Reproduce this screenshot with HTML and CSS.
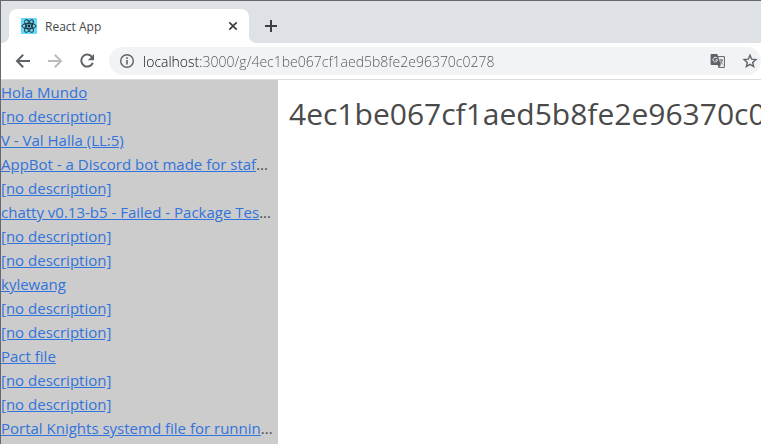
FILE: index.html
```
<!DOCTYPE html>
<html lang="en">
<head>
    <meta charset="UTF-8">
    <title>React App</title>
    <link rel="stylesheet" href="styles.css">
</head>
<body>
    <div class="tabs">
        <div class="tab">
            <svg class="favicon" viewBox="0 0 16 16" width="16" height="16">
                <rect width="16" height="16" rx="1" fill="#61dafb"/>
                <g fill="none" stroke="#20232a" stroke-width=".9">
                    <ellipse cx="8" cy="8" rx="7" ry="2.7"/>
                    <ellipse cx="8" cy="8" rx="7" ry="2.7" transform="rotate(60 8 8)"/>
                    <ellipse cx="8" cy="8" rx="7" ry="2.7" transform="rotate(120 8 8)"/>
                </g>
                <circle cx="8" cy="8" r="1.4" fill="#20232a"/>
            </svg>
            <span class="tab-title">React App</span>
            <button class="icon-button" aria-label="Close tab">
                <svg viewBox="0 0 16 16" width="16" height="16"><path d="M4.3 4.3l7.4 7.4M11.7 4.3l-7.4 7.4" stroke="#3c4043" stroke-width="1.7"/></svg>
            </button>
        </div>
        <button class="icon-button new-tab" aria-label="New tab">
            <svg viewBox="0 0 16 16" width="16" height="16"><path d="M8 2v12M2 8h12" stroke="#3c4043" stroke-width="2"/></svg>
        </button>
    </div>
    <div class="toolbar">
        <button class="icon-button" aria-label="Back">
            <svg viewBox="0 0 16 16" width="16" height="16"><path d="M15 8H2.5M8.2 1.8L2 8l6.2 6.2" fill="none" stroke="#5f6368" stroke-width="2"/></svg>
        </button>
        <button class="icon-button" aria-label="Forward" disabled>
            <svg viewBox="0 0 16 16" width="16" height="16"><path d="M1 8h12.5M7.8 1.8L14 8l-6.2 6.2" fill="none" stroke="#babcbe" stroke-width="2"/></svg>
        </button>
        <button class="icon-button" aria-label="Reload">
            <svg viewBox="0 0 16 16" width="16" height="16"><path d="M13.2 4.2A6 6 0 1 0 13.8 9.8" fill="none" stroke="#5f6368" stroke-width="2"/><path d="M15 1v6.2H8.8z" fill="#5f6368"/></svg>
        </button>
        <div class="address">
            <button class="icon-button" aria-label="Site information">
                <svg viewBox="0 0 16 16" width="16" height="16"><circle cx="8" cy="8" r="6.3" fill="none" stroke="#5f6368" stroke-width="1.4"/><path d="M8 4.3v1.6M8 7v4.6" stroke="#5f6368" stroke-width="1.6"/></svg>
            </button>
            <input class="url" type="text" aria-label="Address" value="localhost:3000/g/4ec1be067cf1aed5b8fe2e96370c0278">
            <button class="icon-button" aria-label="Translate this page">
                <svg viewBox="0 0 16 16" width="16" height="16">
                    <path d="M7 3.6h7.4v10.8H8.5" fill="#f1f3f4" stroke="#5f6368"/>
                    <path d="M1.5 1h5.8l3.6 11H1.5a.9.9 0 0 1-.9-.9V1.9A.9.9 0 0 1 1.5 1z" fill="#5f6368"/>
                    <path d="M7.6 12h3.3l-2.3 2.7z" fill="#5f6368"/>
                    <path d="M7 5a2.3 2.3 0 1 0 .6 1.8H5.4" fill="none" stroke="#f1f3f4"/>
                    <path d="M9.3 7H13M11 6v1M12.3 7c-.3 1.6-1 2.6-2 3.5M10 8.2l2.8 3.3" fill="none" stroke="#5f6368" stroke-width=".9"/>
                </svg>
            </button>
            <button class="icon-button" aria-label="Bookmark this page">
                <svg viewBox="0 0 16 16" width="16" height="16"><path d="M8 2.3l1.7 3.9 4.2.4-3.2 2.8.95 4.15L8 11.35l-3.65 2.2.95-4.15-3.2-2.8 4.2-.4z" fill="none" stroke="#5f6368" stroke-width="1.4"/></svg>
            </button>
        </div>
    </div>
    <div class="page">
        <nav class="sidebar">
            <ul class="gists">
                <li><a href="#">Hola Mundo</a></li>
                <li><a href="#">[no description]</a></li>
                <li><a href="#">V - Val Halla (LL:5)</a></li>
                <li><a href="#">AppBot - a Discord bot made for staf</a>...</li>
                <li><a href="#">[no description]</a></li>
                <li><a href="#">chatty v0.13-b5 - Failed - Package Tes</a>...</li>
                <li><a href="#">[no description]</a></li>
                <li><a href="#">[no description]</a></li>
                <li><a href="#">kylewang</a></li>
                <li><a href="#">[no description]</a></li>
                <li><a href="#">[no description]</a></li>
                <li><a href="#">Pact file</a></li>
                <li><a href="#">[no description]</a></li>
                <li><a href="#">[no description]</a></li>
                <li><a href="#">Portal Knights systemd file for runnin</a>...</li>
            </ul>
        </nav>
        <main class="main">
            <h1>4ec1be067cf1aed5b8fe2e96370c0278</h1>
        </main>
    </div>
</body>
</html>
```
FILE: styles.css
```
* {
    box-sizing: border-box;
}
body {
    display: flex;
    flex-direction: column;
    height: 100vh;
    margin: 0;
    border-top: 1px solid #67686b;
    border-left: 1px solid #67686b;
    background: white;
    color: #4a4a4a;
    font-family: "Open Sans", "Noto Sans", sans-serif;
    font-size: 15px;
    overflow: hidden;
}
.icon-button {
    display: flex;
    flex: none;
    padding: 0;
    border: none;
    background: none;
}
.tabs {
    display: flex;
    align-items: center;
    padding: 8px 8px 0;
    background: #dee1e6;
}
.tab {
    display: flex;
    align-items: center;
    position: relative;
    width: 240px;
    height: 34px;
    padding: 0 8px 0 12px;
    border-radius: 8px 8px 0 0;
    background: white;
}
/* curved feet of the active tab */
.tab::before,
.tab::after {
    content: "";
    position: absolute;
    bottom: 0;
    width: 8px;
    height: 8px;
}
.tab::before {
    right: 100%;
    background: radial-gradient(circle at 0 0, transparent 8px, white 8px);
}
.tab::after {
    left: 100%;
    background: radial-gradient(circle at 100% 0, transparent 8px, white 8px);
}
.tab-title {
    flex: 1;
    margin-left: 8px;
    color: #45474a;
    font-size: 12px;
}
.new-tab {
    margin-left: 14px;
}
.toolbar {
    display: flex;
    align-items: center;
    gap: 16px;
    padding: 4px 0 4px 14px;
    border-bottom: 1px solid #dadce0;
}
.address {
    display: flex;
    flex: 1;
    align-items: center;
    height: 28px;
    margin-left: -2px;
    padding: 0 3px 0 10px;
    border-radius: 14px;
    background: #f1f3f4;
}
.address .icon-button + .icon-button {
    margin-left: 16px;
}
.url {
    flex: 1;
    min-width: 0;
    margin: 0 8px;
    padding: 0;
    border: none;
    outline: none;
    /* the host is darker than the rest of the address */
    background: linear-gradient(to right, #101114 58px, #505459 58px);
    -webkit-background-clip: text;
    background-clip: text;
    color: transparent;
    caret-color: #202124;
    font-family: inherit;
    font-size: 14px;
    font-weight: 300;
}
.page {
    display: flex;
    flex: 1;
    min-height: 0;
}
.sidebar {
    flex: none;
    width: 277px;
    background: #ccc;
    overflow: hidden;
}
.gists {
    margin: 0;
    padding: 0;
    list-style: none;
    line-height: 24px;
}
.gists li {
    overflow: hidden;
    text-overflow: ellipsis;
    white-space: nowrap;
}
.gists a {
    color: #3273dc;
    text-decoration: underline;
}
.main {
    flex: 1;
    min-width: 0;
    padding: 10px 11px;
    overflow: hidden;
}
h1 {
    margin: 0;
    font-size: 30px;
    font-weight: 400;
    line-height: 48px;
    white-space: nowrap;
}
```
